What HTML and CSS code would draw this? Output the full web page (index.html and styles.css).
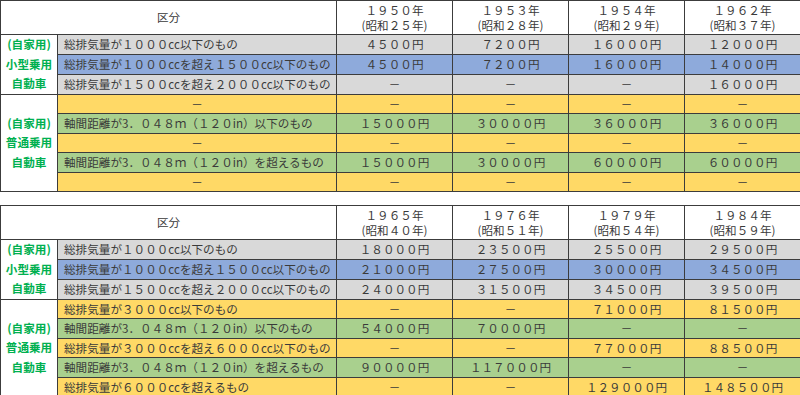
FILE: index.html
```html
<!DOCTYPE html>
<html lang="ja">
<head>
<meta charset="utf-8">
<link rel="stylesheet" href="styles.css">
</head>
<body>
<div class="page">
<table class="tax">
  <colgroup><col class="c-grp"><col class="c-lbl"><col class="c-val"><col class="c-val"><col class="c-val"><col class="c-val"></colgroup>
  <tr class="head">
    <th colspan="2">区分</th>
    <th>１９５０年<br>(昭和２５年)</th>
    <th>１９５３年<br>(昭和２８年)</th>
    <th>１９５４年<br>(昭和２９年)</th>
    <th>１９６２年<br>(昭和３７年)</th>
  </tr>
  <tr class="gray">
    <td class="grp" rowspan="3">(自家用)<br>小型乗用<br>自動車</td>
    <td class="lbl">総排気量が１０００cc以下のもの</td>
    <td>４５００円</td><td>７２００円</td><td>１６０００円</td><td>１２０００円</td>
  </tr>
  <tr class="blue">
    <td class="lbl">総排気量が１０００ccを超え１５００cc以下のもの</td>
    <td>４５００円</td><td>７２００円</td><td>１６０００円</td><td>１４０００円</td>
  </tr>
  <tr class="gray">
    <td class="lbl">総排気量が１５００ccを超え２０００cc以下のもの</td>
    <td>－</td><td>－</td><td>－</td><td>１６０００円</td>
  </tr>
  <tr class="yellow">
    <td class="grp" rowspan="5">(自家用)<br>普通乗用<br>自動車</td>
    <td>－</td>
    <td>－</td><td>－</td><td>－</td><td>－</td>
  </tr>
  <tr class="green">
    <td class="lbl">軸間距離が3．０４８ｍ（１２０in）以下のもの</td>
    <td>１５０００円</td><td>３００００円</td><td>３６０００円</td><td>３６０００円</td>
  </tr>
  <tr class="yellow">
    <td>－</td>
    <td>－</td><td>－</td><td>－</td><td>－</td>
  </tr>
  <tr class="green">
    <td class="lbl">軸間距離が3．０４８ｍ（１２０in）を超えるもの</td>
    <td>１５０００円</td><td>３００００円</td><td>６００００円</td><td>６００００円</td>
  </tr>
  <tr class="yellow">
    <td>－</td>
    <td>－</td><td>－</td><td>－</td><td>－</td>
  </tr>
</table>

<table class="tax second">
  <colgroup><col class="c-grp"><col class="c-lbl"><col class="c-val"><col class="c-val"><col class="c-val"><col class="c-val"></colgroup>
  <tr class="head">
    <th colspan="2">区分</th>
    <th>１９６５年<br>(昭和４０年)</th>
    <th>１９７６年<br>(昭和５１年)</th>
    <th>１９７９年<br>(昭和５４年)</th>
    <th>１９８４年<br>(昭和５９年)</th>
  </tr>
  <tr class="gray">
    <td class="grp" rowspan="3">(自家用)<br>小型乗用<br>自動車</td>
    <td class="lbl">総排気量が１０００cc以下のもの</td>
    <td>１８０００円</td><td>２３５００円</td><td>２５５００円</td><td>２９５００円</td>
  </tr>
  <tr class="blue">
    <td class="lbl">総排気量が１０００ccを超え１５００cc以下のもの</td>
    <td>２１０００円</td><td>２７５００円</td><td>３００００円</td><td>３４５００円</td>
  </tr>
  <tr class="gray">
    <td class="lbl">総排気量が１５００ccを超え２０００cc以下のもの</td>
    <td>２４０００円</td><td>３１５００円</td><td>３４５００円</td><td>３９５００円</td>
  </tr>
  <tr class="yellow">
    <td class="grp" rowspan="5">(自家用)<br>普通乗用<br>自動車</td>
    <td class="lbl">総排気量が３０００cc以下のもの</td>
    <td>－</td><td>－</td><td>７１０００円</td><td>８１５００円</td>
  </tr>
  <tr class="green">
    <td class="lbl">軸間距離が3．０４８ｍ（１２０in）以下のもの</td>
    <td>５４０００円</td><td>７００００円</td><td>－</td><td>－</td>
  </tr>
  <tr class="yellow">
    <td class="lbl">総排気量が３０００ccを超え６０００cc以下のもの</td>
    <td>－</td><td>－</td><td>７７０００円</td><td>８８５００円</td>
  </tr>
  <tr class="green">
    <td class="lbl">軸間距離が3．０４８ｍ（１２０in）を超えるもの</td>
    <td>９００００円</td><td>１１７０００円</td><td>－</td><td>－</td>
  </tr>
  <tr class="yellow">
    <td class="lbl">総排気量が６０００ccを超えるもの</td>
    <td>－</td><td>－</td><td>１２９０００円</td><td>１４８５００円</td>
  </tr>
</table>
</div>
</body>
</html>
```
FILE: styles.css
```css
html, body {
  margin: 0;
  padding: 0;
  background: #ffffff;
}
body {
  overflow: hidden;
  width: 800px;
  height: 395px;
}
.page {
  width: 801px;
}
.tax {
  border-collapse: collapse;
  table-layout: fixed;
  width: 801px;
  font-family: "Noto Sans CJK JP", "Noto Sans", sans-serif;
  font-size: 11.6px;
  color: #3a3a3a;
}
.second {
  margin-top: 13px;
}
.c-grp { width: 57px; }
.c-lbl { width: 279px; }
.c-val { width: 116px; }
.tax th,
.tax td {
  border: 1px solid #3c3c3c;
  padding: 0;
  text-align: center;
  white-space: nowrap;
  overflow: hidden;
  line-height: 14px;
}
.tax th {
  font-weight: normal;
  background: #ffffff;
}
.head {
  height: 34px;
}
.head th {
  line-height: 14.5px;
}
.tax tr:not(.head) {
  height: 19.5px;
}
.tax td.lbl {
  text-align: left;
  padding-left: 6px;
}
.tax td.grp {
  background: #ffffff;
  color: #00b050;
  font-weight: bold;
  line-height: 19.5px;
}
.gray td { background: #d9d9d9; }
.blue td { background: #8eaadb; }
.yellow td { background: #ffd966; }
.green td { background: #a9d08e; }
```
